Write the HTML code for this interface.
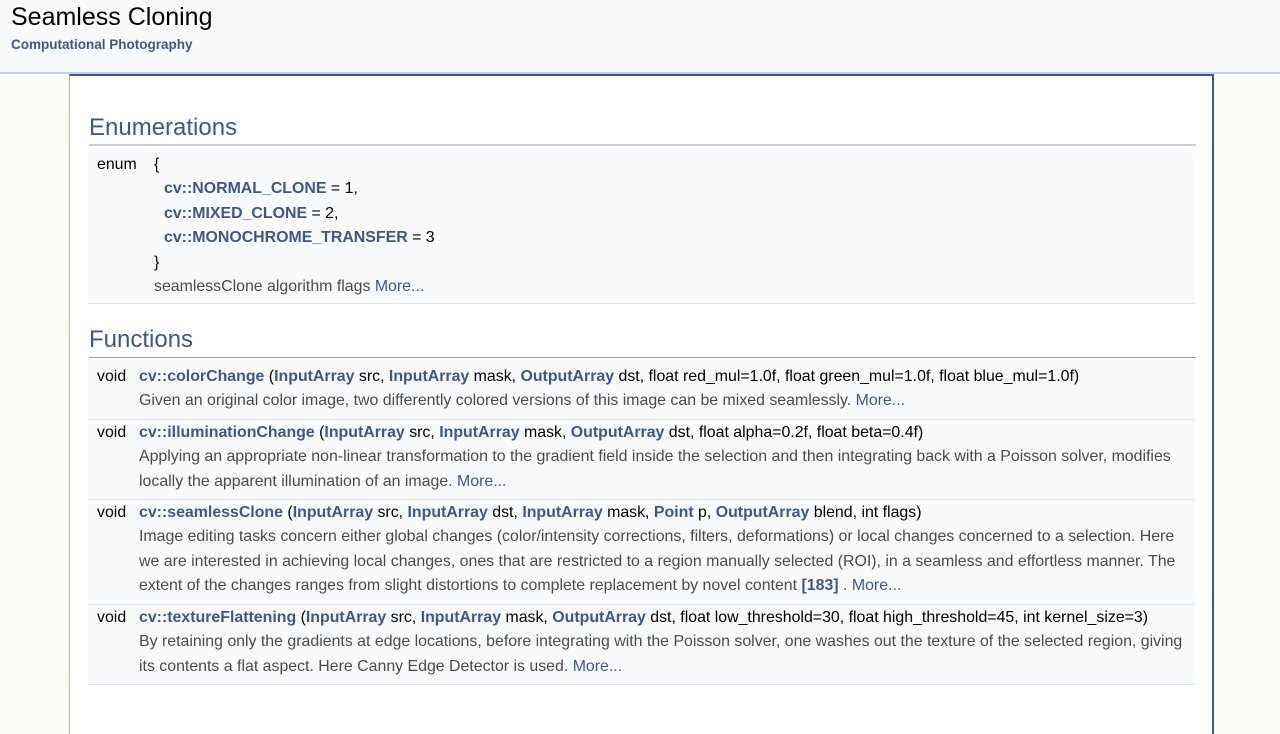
<!DOCTYPE html>
<html><head><meta charset="utf-8"><style>
*{margin:0;padding:0;box-sizing:border-box}
body{width:1280px;height:714px;overflow:hidden;font-family:"Liberation Sans",Arial,sans-serif;background:#fbfcf6;position:relative;color:#000}
.hdr{position:absolute;left:0;top:0;width:1280px;height:74px;background:#f9fafc;border-bottom:2px solid #c4cfe5}
.hdr h1{position:absolute;left:11px;top:3px;font-size:25px;font-weight:normal;color:#000}
.hdr .sub{position:absolute;left:11px;top:37px;font-size:13.5px;font-weight:bold;color:#3d578c}
.box{position:absolute;left:69px;top:74px;width:1145px;height:660px;background:#fff;border-left:1px solid #9fb3d6;border-right:2px solid #3d578c;border-top:2px solid #3d578c}
h2{position:absolute;left:19px;font-size:24px;font-weight:normal;color:#3d578c;width:1107px}
.row{position:absolute;left:18px;width:1107px;background:#f9fafc;border-bottom:1px solid #dee4f0;font-size:15.9px;line-height:24.5px}
.l{position:absolute;white-space:nowrap;margin-top:1px}
.e .l{margin-top:2px}
a,b{color:#3d578c;font-weight:bold;text-decoration:none}
.d{color:#4a4a4a}
.d a{font-weight:normal}
</style></head><body>
<div class="hdr"><h1>Seamless Cloning</h1><div class="sub">Computational Photography</div></div>
<div class="box">
<h2 style="top:38px;height:32px;border-bottom:2px solid #c4cfe5">Enumerations</h2>
<div class="row e" style="top:74px;height:154px">
<div class="l" style="left:9px;top:1px">enum</div>
<div class="l" style="left:66px;top:1px">{</div>
<div class="l" style="left:76px;top:25px"><b>cv::NORMAL_CLONE</b> = 1,</div>
<div class="l" style="left:76px;top:50px"><b>cv::MIXED_CLONE</b> = 2,</div>
<div class="l" style="left:76px;top:74px"><b>cv::MONOCHROME_TRANSFER</b> = 3</div>
<div class="l" style="left:66px;top:99px">}</div>
<div class="l d" style="left:66px;top:123px">seamlessClone algorithm flags <a>More...</a></div>
</div>
<h2 style="top:250px;height:32px;border-bottom:1px solid #879ecb">Functions</h2>
<div class="row" style="top:284px;height:60px">
<div class="l" style="left:9px;top:4px">void</div>
<div class="l" style="left:51px;top:4px"><b>cv::colorChange</b> (<b>InputArray</b> src, <b>InputArray</b> mask, <b>OutputArray</b> dst, float red_mul=1.0f, float green_mul=1.0f, float blue_mul=1.0f)</div>
<div class="l d" style="left:51px;top:28px">Given an original color image, two differently colored versions of this image can be mixed seamlessly. <a>More...</a></div>
</div>
<div class="row" style="top:344px;height:80px">
<div class="l" style="left:9px;top:0px">void</div>
<div class="l" style="left:51px;top:0px"><b>cv::illuminationChange</b> (<b>InputArray</b> src, <b>InputArray</b> mask, <b>OutputArray</b> dst, float alpha=0.2f, float beta=0.4f)</div>
<div class="l d" style="left:51px;top:24px">Applying an appropriate non-linear transformation to the gradient field inside the selection and then integrating back with a Poisson solver, modifies</div>
<div class="l d" style="left:51px;top:49px">locally the apparent illumination of an image. <a>More...</a></div>
</div>
<div class="row" style="top:424px;height:105px">
<div class="l" style="left:9px;top:0px">void</div>
<div class="l" style="left:51px;top:0px"><b>cv::seamlessClone</b> (<b>InputArray</b> src, <b>InputArray</b> dst, <b>InputArray</b> mask, <b>Point</b> p, <b>OutputArray</b> blend, int flags)</div>
<div class="l d" style="left:51px;top:24px">Image editing tasks concern either global changes (color/intensity corrections, filters, deformations) or local changes concerned to a selection. Here</div>
<div class="l d" style="left:51px;top:49px">we are interested in achieving local changes, ones that are restricted to a region manually selected (ROI), in a seamless and effortless manner. The</div>
<div class="l d" style="left:51px;top:73px">extent of the changes ranges from slight distortions to complete replacement by novel content <b>[183]</b> . <a>More...</a></div>
</div>
<div class="row" style="top:529px;height:80px">
<div class="l" style="left:9px;top:0px">void</div>
<div class="l" style="left:51px;top:0px"><b>cv::textureFlattening</b> (<b>InputArray</b> src, <b>InputArray</b> mask, <b>OutputArray</b> dst, float low_threshold=30, float high_threshold=45, int kernel_size=3)</div>
<div class="l d" style="left:51px;top:24px">By retaining only the gradients at edge locations, before integrating with the Poisson solver, one washes out the texture of the selected region, giving</div>
<div class="l d" style="left:51px;top:49px">its contents a flat aspect. Here Canny Edge Detector is used. <a>More...</a></div>
</div>
</div>
</body></html>
